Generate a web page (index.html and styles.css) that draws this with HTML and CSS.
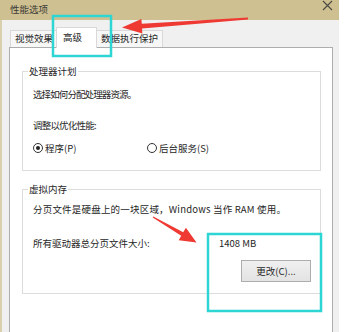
FILE: index.html
```html
<!DOCTYPE html>
<html lang="zh-CN">
<head>
<meta charset="utf-8">
<title>性能选项</title>
<link rel="stylesheet" href="styles.css">
</head>
<body>
<div class="window">
  <div class="titlebar">
    <span class="title">性能选项</span>
    <svg class="close" width="11" height="11" viewBox="0 0 11 11"><path d="M1 1L10 10M10 1L1 10" stroke="#4a4a44" stroke-width="1.1" fill="none"/></svg>
  </div>
  <div class="tabstrip">
    <div class="tab tab-visual">视觉效果</div>
    <div class="tab tab-active">高级</div>
    <div class="tab tab-dep">数据执行保护</div>
  </div>
  <div class="panel">
    <div class="group group-cpu">
      <span class="legend">处理器计划</span>
      <div class="line line-first">选择如何分配处理器资源。</div>
      <div class="line line-adjust">调整以优化性能:</div>
      <div class="radios">
        <div class="radio radio-prog"><span class="dot checked"></span><span>程序(P)</span></div>
        <div class="radio"><span class="dot"></span><span>后台服务(S)</span></div>
      </div>
    </div>
    <div class="group group-mem">
      <span class="legend">虚拟内存</span>
      <div class="line line-paging">分页文件是硬盘上的一块区域，Windows 当作 RAM 使用。</div>
      <div class="line size-row"><span class="size-label">所有驱动器总分页文件大小:</span><span>1408 MB</span></div>
      <button class="btn" type="button">更改(C)...</button>
    </div>
  </div>
</div>
<svg class="overlay" width="363" height="332" viewBox="0 0 363 332">
  <rect x="53" y="16" width="58" height="40" fill="none" stroke="#2dd6d2" stroke-width="2.5"/>
  <rect x="208" y="234" width="113" height="77" fill="none" stroke="#2dd6d2" stroke-width="2.5"/>
  <polygon points="248,17.5 141.8,23.8 141.4,19.1 122,27.5 142.4,33.6 142,28.4 248,19.5" fill="#ee3a33"/>
  <polygon points="152.7,217.4 181.2,235.7 178.7,240.2 196.5,242.5 185.9,227.8 183.2,232.3 153.3,216.4" fill="#ee3a33"/>
</svg>
</body>
</html>
```
FILE: styles.css
```css
html, body {
  margin: 0;
  padding: 0;
  background: #ffffff;
  overflow: hidden;
}
body {
  width: 363px;
  height: 332px;
  position: relative;
  font-family: "Noto Sans CJK SC", "Noto Sans", sans-serif;
  font-size: 9.5px;
  color: #262626;
}
.window {
  width: 337px;
  height: 332px;
  background: #f0f0f0;
  border-left: 2px solid #d8cfae;
  display: flex;
  flex-direction: column;
}
.titlebar {
  height: 20px;
  margin-left: -2px;
  padding: 0 6px 0 10px;
  background: #cfc091;
  display: flex;
  align-items: flex-start;
  justify-content: space-between;
  flex-shrink: 0;
}
.title {
  line-height: 18px;
  color: #3a3a36;
}
.tabstrip {
  height: 27px;
  padding-left: 8px;
  display: flex;
  align-items: flex-end;
  flex-shrink: 0;
}
.tab {
  box-sizing: border-box;
  height: 17px;
  line-height: 15px;
  border: 1px solid #d9d9d9;
  border-bottom: none;
  background: #f7f7f7;
  white-space: nowrap;
}
.tab-visual {
  width: 46px;
  padding-left: 4px;
  border-right: none;
}
.tab-active {
  width: 41px;
  height: 21px;
  line-height: 18px;
  padding-left: 6px;
  margin-bottom: -1px;
  background: #ffffff;
  position: relative;
  z-index: 1;
}
.tab-dep {
  width: 66px;
  padding-left: 4px;
  border-left: none;
}
.panel {
  flex: 1;
  margin-left: 7px;
  margin-right: 6px;
  background: #ffffff;
  border: 1px solid #adadad;
  border-bottom: none;
  padding: 23px 11px 0 12px;
}
.group {
  border: 1px solid #dcdcdc;
  padding: 0 0 0 10px;
}
.legend {
  display: block;
  width: fit-content;
  margin-top: -8px;
  margin-left: -5px;
  padding: 0 1px;
  line-height: 14px;
  background: #ffffff;
}
.line {
  line-height: 14px;
  white-space: nowrap;
}
.line-first {
  margin-top: 9px;
  letter-spacing: -0.9px;
}
.line-adjust {
  margin-top: 17px;
  letter-spacing: -0.8px;
}
.radios {
  margin-top: 9px;
  line-height: 14px;
  display: flex;
  padding-bottom: 15px;
}
.radio {
  display: flex;
  align-items: center;
  gap: 2px;
}
.radio-prog {
  width: 114px;
}
.dot {
  box-sizing: border-box;
  width: 10px;
  height: 10px;
  border: 1px solid #333333;
  border-radius: 50%;
  display: flex;
  align-items: center;
  justify-content: center;
  background: #ffffff;
}
.dot.checked::after {
  content: "";
  width: 4px;
  height: 4px;
  border-radius: 50%;
  background: #222222;
}
.group-mem {
  margin-top: 18px;
  padding-bottom: 11px;
}
.line-paging {
  margin-top: 6px;
  letter-spacing: 0.2px;
}
.size-row {
  margin-top: 20px;
  display: flex;
}
.size-label {
  width: 186px;
}
.btn {
  display: block;
  box-sizing: border-box;
  width: 70px;
  height: 22px;
  margin: 10px 0 0 208px;
  padding: 0;
  border: 1px solid #adadad;
  background: linear-gradient(#f0f0f0, #e3e3e3);
  font-family: inherit;
  font-size: 9.5px;
  color: #262626;
}
.overlay {
  position: absolute;
  left: 0;
  top: 0;
  pointer-events: none;
}
```
